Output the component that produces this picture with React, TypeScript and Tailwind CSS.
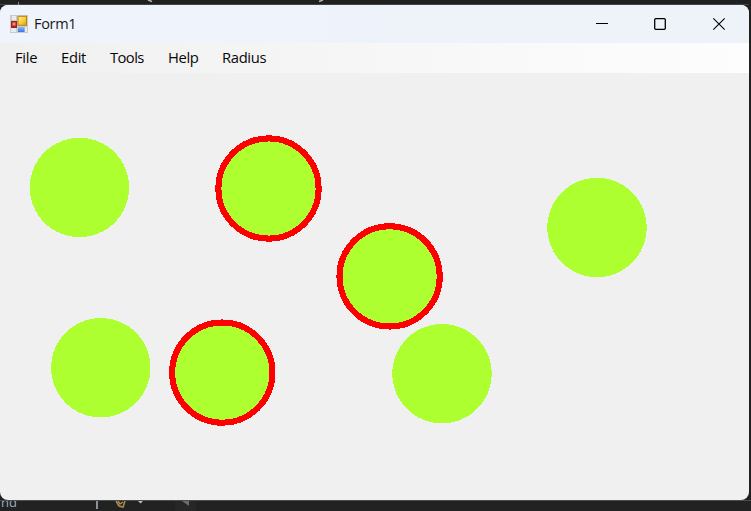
const menuItems = [
  { label: 'File', cls: 'w-[46px] tracking-[-0.3px]' },
  { label: 'Edit', cls: 'w-[49px] tracking-[-0.3px]' },
  { label: 'Tools', cls: 'w-[58px] tracking-[-0.6px]' },
  { label: 'Help', cls: 'w-[54px] tracking-[-0.4px]' },
  { label: 'Radius', cls: 'w-[60px] tracking-[-0.35px]' },
];

const circles = [
  { x: 79.5, y: 187.5, selected: false },
  { x: 268.5, y: 188.5, selected: true },
  { x: 389.6, y: 276.4, selected: true },
  { x: 442, y: 373.7, selected: false },
  { x: 100.8, y: 367.7, selected: false },
  { x: 222.3, y: 372.6, selected: true },
  { x: 597, y: 227.5, selected: false },
];

function FormIcon() {
  return (
    <svg width="18" height="18" viewBox="0 0 18 18" className="block shrink-0">
      <defs>
        <linearGradient id="gold" x1="0" y1="0" x2="1" y2="1">
          <stop offset="0" stopColor="#ffee91" />
          <stop offset="0.6" stopColor="#f8c92d" />
          <stop offset="1" stopColor="#dda413" />
        </linearGradient>
        <linearGradient id="blue" x1="0" y1="0" x2="0" y2="1">
          <stop offset="0" stopColor="#8bb9fa" />
          <stop offset="1" stopColor="#3975d6" />
        </linearGradient>
      </defs>
      <rect width="18" height="18" fill="#c9cbcf" />
      <path d="M2 1h4v4H2zM1 13h5v4H1zM15 12h2v5h-2z" fill="#e9ebee" />
      <rect x="1" y="6" width="6" height="7" fill="#a3221b" />
      <rect x="2" y="7" width="4" height="4" fill="#d64b3c" />
      <rect x="3" y="8" width="2" height="2" fill="#ee9788" />
      <rect x="7.5" y="0.8" width="9.5" height="10" fill="#b9820c" />
      <rect x="8.5" y="1.8" width="7.5" height="8" fill="url(#gold)" />
      <rect x="8" y="12" width="6.5" height="5" fill="url(#blue)" />
    </svg>
  );
}

function TitleBar() {
  return (
    <header className="flex h-[38px] shrink-0 items-center bg-linear-to-r from-[#eef3fc] from-40% to-[#edf3f8] to-60% pl-[10px]">
      <FormIcon />
      <span className="ml-[6px] flex-1 text-[14.5px] leading-none tracking-[-0.3px] text-[#191919]">Form1</span>
      <svg width="160" height="38" viewBox="589 5 160 38" fill="none" className="block shrink-0">
        <path d="M596 23.5h12" stroke="#000" />
        <rect x="654.7" y="18.7" width="10.6" height="10.6" rx="1" stroke="#000" strokeWidth="1.3" />
        <path d="M713.3 18.3l11.4 11.4M724.7 18.3l-11.4 11.4" stroke="#000" strokeWidth="1.1" />
      </svg>
    </header>
  );
}

export default function App() {
  return (
    <div
      className="flex h-[511px] w-[751px] flex-col overflow-hidden bg-[#202020]"
      style={{ fontFamily: '"Open Sans", "Noto Sans", sans-serif' }}
    >
      <svg width="751" height="5" className="block shrink-0">
        <path d="M0 4.5h749" stroke="#444" />
        <path d="M18.5 2v3" stroke="#888" />
        <path d="M148 0l4 1.5M323 0l-4 1.5" stroke="#bbb0a8" strokeWidth="1.5" />
      </svg>
      <main className="flex h-[495px] w-[749px] shrink-0 flex-col overflow-hidden rounded-[8px] bg-[#f0f0f0]">
        <TitleBar />
        <nav className="flex h-[30px] shrink-0 items-center bg-linear-to-r from-[#f0f0f0] to-[#fdfdfd] pb-[2px] pl-[15px] text-[14.8px] leading-none text-[#080808]">
          {menuItems.map((item) => (
            <span key={item.label} className={item.cls}>{item.label}</span>
          ))}
        </nav>
        <svg width="749" height="427" viewBox="0 73 749 427" shapeRendering="crispEdges" className="block shrink-0">
          {circles.map((c) => (
            <circle
              key={c.x}
              cx={c.x}
              cy={c.y}
              r={c.selected ? 50.1 : 49.7}
              fill="#adff2f"
              stroke={c.selected ? '#ff0000' : 'none'}
              strokeWidth="6.1"
            />
          ))}
        </svg>
      </main>
      <footer className="relative h-[11px] shrink-0 border-t border-[#46504b] bg-[#222222]">
        <span className="absolute -top-[7px] left-px h-[16px] text-[13px] leading-[16px] text-[#9aafbd] [clip-path:inset(7px_0_0_0)]">nd</span>
        <svg width="751" height="10" viewBox="0 501 751 10" className="block">
          <path d="M97 501v8" stroke="#8b929c" strokeWidth="2" />
          <path d="M116 501l3 5 4 1 2-6M118 501l2 3 3-2" fill="none" stroke="#ab8c50" strokeWidth="1.5" />
          <path d="M138 501h5l-2.5 2.5z" fill="#bbb" />
          <path d="M175 501h21v10h-21z" fill="#272727" />
          <path d="M182 501h7v5z" fill="#6c6c6c" />
        </svg>
      </footer>
    </div>
  );
}
